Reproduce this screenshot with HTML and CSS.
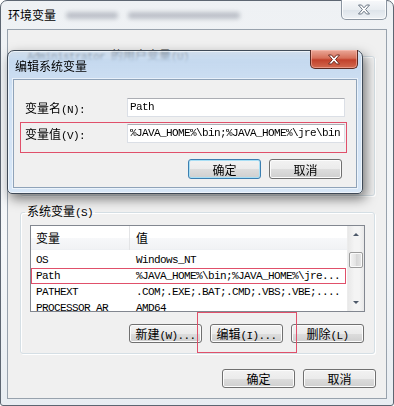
FILE: index.html
```html
<!DOCTYPE html>
<html lang="zh-CN">
<head>
    <meta charset="UTF-8">
    <meta name="viewport" content="width=device-width, initial-scale=1.0">
    <title>环境变量</title>
    <link rel="stylesheet" href="styles.css">
</head>
<body>
    <div class="win">
        <div class="titlebar">
            <span class="title">环境变量</span>
            <span class="ghost g1"></span>
            <span class="ghost g2"></span>
            <div class="caption-close">
                <svg width="14" height="11" viewBox="0 0 14 11">
                    <path d="M1.5 1 H4.5 L7 3.8 L9.5 1 H12.5 L8.6 5.5 L12.5 10 H9.5 L7 7.2 L4.5 10 H1.5 L5.4 5.5 Z" fill="#fff" stroke="#6b7684" stroke-width="1" stroke-linejoin="round"/>
                </svg>
            </div>
        </div>
        <div class="client">
            <fieldset class="group user-group">
                <legend><span class="mono">Administrator </span>的用户变量<span class="mono">(U)</span></legend>
            </fieldset>
            <fieldset class="group sys-group">
                <legend>系统变量<span class="mono">(S)</span></legend>
                <div class="listview">
                    <div class="lv-body">
                        <div class="lv-header">
                            <span class="col1">变量</span>
                            <span class="col2">值</span>
                        </div>
                        <div class="lv-row"><span class="col1 mono">OS</span><span class="col2 mono">Windows_NT</span></div>
                        <div class="lv-row marked"><span class="col1 mono">Path</span><span class="col2 mono">%JAVA_HOME%\bin;%JAVA_HOME%\jre...</span></div>
                        <div class="lv-row"><span class="col1 mono">PATHEXT</span><span class="col2 mono">.COM;.EXE;.BAT;.CMD;.VBS;.VBE;....</span></div>
                        <div class="lv-row"><span class="col1 mono">PROCESSOR_AR</span><span class="col2 mono">AMD64</span></div>
                    </div>
                    <div class="vscroll">
                        <div class="sb-arrow up"></div>
                        <div class="sb-track"><div class="sb-thumb"></div></div>
                        <div class="sb-arrow down"></div>
                    </div>
                </div>
                <div class="btn-row">
                    <button class="btn">新建<span class="mono">(W)...</span></button>
                    <span class="mark-wrap"><button class="btn">编辑<span class="mono">(I)...</span></button></span>
                    <button class="btn">删除<span class="mono">(L)</span></button>
                </div>
            </fieldset>
            <div class="btn-row footer">
                <button class="btn">确定</button>
                <button class="btn">取消</button>
            </div>
        </div>

        <!-- 编辑系统变量 dialog on top -->
        <div class="dialog">
            <div class="dlg-titlebar">
                <span class="title">编辑系统变量</span>
                <div class="dlg-close">
                    <svg width="14" height="11" viewBox="0 0 14 11">
                        <path d="M1.5 1 H4.5 L7 3.8 L9.5 1 H12.5 L8.6 5.5 L12.5 10 H9.5 L7 7.2 L4.5 10 H1.5 L5.4 5.5 Z" fill="#fff" stroke="#6e2a20" stroke-width="1" stroke-linejoin="round"/>
                    </svg>
                </div>
            </div>
            <div class="dlg-client">
                <div class="field-row">
                    <label class="field-label">变量名<span class="mono">(N):</span></label>
                    <div class="textbox mono">Path</div>
                </div>
                <div class="field-row marked-row">
                    <label class="field-label">变量值<span class="mono">(V):</span></label>
                    <div class="textbox mono">%JAVA_HOME%\bin;%JAVA_HOME%\jre\bin</div>
                </div>
                <div class="btn-row dlg-buttons">
                    <button class="btn default">确定</button>
                    <button class="btn">取消</button>
                </div>
            </div>
        </div>
    </div>
</body>
</html>
```

FILE: styles.css
```css
/* Windows 7 style dialogs */
* {
    box-sizing: border-box;
}
body {
    margin: 0;
    width: 394px;
    height: 406px;
    overflow: hidden;
    font-family: "Noto Sans CJK SC", sans-serif;
    font-size: 12px;
    color: #000;
    background: #fff;
}
.mono {
    font-family: "Liberation Mono", monospace;
    font-size: 11px;
    letter-spacing: -0.6px;
}

/* outer window */
.win {
    position: relative;
    width: 394px;
    height: 406px;
    border: 1px solid #5d6672;
    border-radius: 7px 7px 3px 3px;
    background: linear-gradient(180deg, #eef1f4, #f5f7f9 60%, #e8edf2);
    padding: 0 6px 6px;
    display: flex;
    flex-direction: column;
}
.titlebar {
    height: 28px;
    display: flex;
    align-items: flex-start;
    padding-left: 1px;
}
.titlebar .title {
    line-height: 28px;
}
.ghost {
    height: 7px;
    margin-top: 11px;
    border-radius: 3px;
    background: rgba(60, 70, 90, 0.28);
    filter: blur(2px);
}
.ghost.g1 {
    width: 52px;
    margin-left: 10px;
}
.ghost.g2 {
    width: 112px;
    margin-left: 10px;
}
.caption-close {
    margin-left: auto;
    margin-top: -1px;
    width: 46px;
    height: 20px;
    border: 1px solid #8b95a1;
    border-top: none;
    border-radius: 0 0 5px 5px;
    background: linear-gradient(180deg, #f8f9fb, #e9edf1 50%, #dde3ea 51%, #eef1f5);
    box-shadow: inset 0 0 0 1px rgba(255, 255, 255, 0.8);
    display: flex;
    align-items: center;
    justify-content: center;
}
.client {
    flex: 1;
    border: 1px solid #98a2ad;
    background: #f0f0f0;
    display: flex;
    flex-direction: column;
}

/* group boxes */
.group {
    margin: 0 11px 0 12px;
    min-width: 0;
    border: 1px solid #d5dfe5;
    border-radius: 3px;
    box-shadow: inset 1px 1px #fff, 1px 1px #fff;
    padding: 4px 9px 10px 9px;
}
.group legend {
    line-height: 16px;
    padding: 0 2px;
    margin-left: -5px;
}
.user-group {
    margin-top: 17px;
    height: 149px;
}
.user-group legend {
    color: #333;
}
.sys-group {
    margin-top: 7px;
}

/* list view */
.listview {
    height: 87px;
    border: 1px solid #828790;
    background: #fff;
    display: flex;
    overflow: hidden;
}
.lv-body {
    flex: 1;
    overflow: hidden;
}
.lv-header {
    height: 24px;
    display: flex;
    align-items: center;
    margin-bottom: 2px;
    background: linear-gradient(180deg, #fff, #fff 50%, #f7f8fa 51%, #f1f2f4);
    border-bottom: 1px solid #eef0f3;
}
.lv-header .col1 {
    border-right: 1px solid #e3e4e6;
    height: 24px;
    line-height: 24px;
}
.col1 {
    width: 99px;
    padding-left: 5px;
    flex-shrink: 0;
}
.col2 {
    padding-left: 6px;
    white-space: nowrap;
}
.lv-row {
    height: 16px;
    line-height: 16px;
    display: flex;
    white-space: nowrap;
}
.lv-row.marked {
    outline: 1px solid #e0506a;
    outline-offset: -1px;
    margin-right: 1px;
}
.vscroll {
    width: 17px;
    display: flex;
    flex-direction: column;
    background: linear-gradient(90deg, #e8e8e8, #f4f4f4 40%, #f4f4f4 70%, #e8e8e8);
    border-left: 1px solid #ececec;
}
.sb-arrow {
    height: 17px;
    position: relative;
}
.sb-arrow::after {
    content: "";
    position: absolute;
    left: 5px;
    top: 7px;
    border-left: 3px solid transparent;
    border-right: 3px solid transparent;
}
.sb-arrow.up::after {
    border-bottom: 3px solid #4e5a6a;
}
.sb-arrow.down::after {
    border-top: 3px solid #4e5a6a;
}
.sb-track {
    flex: 1;
    padding-top: 9px;
}
.sb-thumb {
    height: 16px;
    margin: 0 1px;
    border: 1px solid #9b9b9b;
    border-radius: 2px;
    background: linear-gradient(90deg, #f4f4f4, #e2e2e2 50%, #d6d6d6 51%, #e6e6e6);
    box-shadow: inset 0 0 0 1px #fafafa;
}

/* buttons */
.btn-row {
    display: flex;
    justify-content: flex-end;
    gap: 8px;
}
.sys-group .btn-row {
    margin-top: 12px;
    padding-right: 1px;
}
.footer {
    margin-top: 15px;
    padding-right: 10px;
}
.btn {
    width: 73px;
    height: 19px;
    padding: 0;
    border: 1px solid #707070;
    border-radius: 3px;
    background: linear-gradient(180deg, #f2f2f2, #ebebeb 50%, #dddddd 51%, #cfcfcf);
    box-shadow: inset 0 0 0 1px #fcfcfc;
    font-family: "Noto Sans CJK SC", sans-serif;
    font-size: 12px;
    line-height: 17px;
    color: #000;
}
.btn.default {
    border-color: #3c7fb1;
    box-shadow: inset 0 0 0 1px #a8dff5;
}
.mark-wrap {
    position: relative;
    display: flex;
}
.mark-wrap::after {
    content: "";
    position: absolute;
    left: -13px;
    right: -14px;
    top: -12px;
    bottom: -10px;
    border: 1px solid #e0506a;
}

/* edit dialog */
.dialog {
    position: absolute;
    left: 6px;
    top: 49px;
    width: 356px;
    height: 144px;
    border: 1px solid #3f4a57;
    border-radius: 7px 7px 5px 5px;
    padding: 0 5px 5px;
    background: linear-gradient(180deg, rgba(178, 204, 232, 0.5), rgba(192, 214, 238, 0.9) 10px, rgba(206, 224, 244, 0.95) 40px, rgba(214, 230, 247, 0.96));
    backdrop-filter: blur(1px);
    box-shadow: 3px 5px 12px rgba(0, 0, 0, 0.5), inset 0 0 0 1px rgba(255, 255, 255, 0.6);
    display: flex;
    flex-direction: column;
}
.dlg-titlebar {
    height: 28px;
    display: flex;
    align-items: flex-start;
    padding-left: 2px;
}
.dlg-titlebar .title {
    line-height: 30px;
}
.dlg-close {
    margin-left: auto;
    margin-top: -1px;
    margin-right: -1px;
    width: 48px;
    height: 19px;
    border: 1px solid #5b2a22;
    border-top: none;
    border-radius: 0 0 5px 5px;
    background: linear-gradient(180deg, #eaa898, #d6705a 45%, #c2412b 55%, #d26a50);
    box-shadow: inset 0 0 0 1px rgba(255, 200, 190, 0.5);
    display: flex;
    align-items: center;
    justify-content: center;
}
.dlg-client {
    flex: 1;
    border: 1px solid #8fa3b9;
    box-shadow: 0 0 0 1px rgba(255, 255, 255, 0.55);
    background: #f0f0f0;
    padding: 18px 9px 0 6px;
}
.field-row {
    display: flex;
    align-items: center;
    padding: 0 2px 0 5px;
}
.marked-row {
    margin-top: 5px;
    border: 1px solid #e0506a;
    padding: 1px 1px 6px 4px;
    align-items: flex-start;
}
.marked-row .field-label {
    line-height: 19px;
}
.field-label {
    width: 102px;
    flex-shrink: 0;
}
.textbox {
    flex: 1;
    height: 19px;
    line-height: 17px;
    padding-left: 2px;
    border: 1px solid #dbdfe6;
    border-top-color: #abadb3;
    background: #fff;
    white-space: nowrap;
    overflow: hidden;
}
.dlg-buttons {
    margin-top: 6px;
    padding-right: 5px;
}
.dlg-buttons .btn {
    height: 20px;
}
```
